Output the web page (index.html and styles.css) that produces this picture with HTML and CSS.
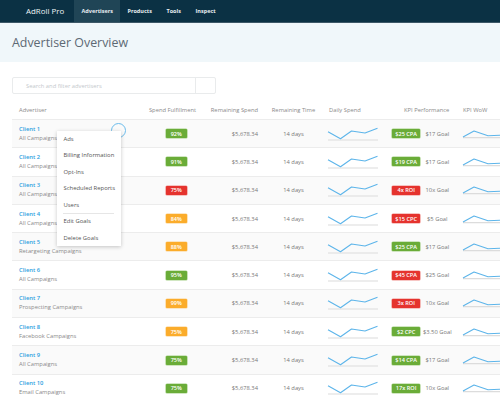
FILE: index.html
```html
<!DOCTYPE html>
<html>
<head>
<meta charset="utf-8">
<link rel="stylesheet" href="styles.css">
</head>
<body>
<nav class="nav">
  <div class="brand">AdRoll Pro</div>
  <a class="tab active">Advertisers</a>
  <a class="tab">Products</a>
  <a class="tab">Tools</a>
  <a class="tab">Inspect</a>
</nav>
<header class="hero"><h1>Advertiser Overview</h1></header>
<main class="content">
  <div class="search">
    <div class="search-input">Search and filter advertisers</div>
    <div class="search-btn"></div>
  </div>
  <div class="table">
    <div class="row head">
      <div class="c1">Advertiser</div>
      <div class="c2">Spend Fulfillment</div>
      <div class="c3">Remaining Spend</div>
      <div class="c4">Remaining Time</div>
      <div class="c5">Daily Spend</div>
      <div class="c6">KPI Performance</div>
      <div class="c7">KPI WoW</div>
    </div>

    <div class="row odd">
      <div class="c1 adv"><a>Client 1</a><span>All Campaigns</span>
        <div class="spinner"></div>
        <ul class="menu">
          <li>Ads</li><li>Billing Information</li><li>Opt-Ins</li><li>Scheduled Reports</li><li>Users</li><li class="sep">Edit Goals</li><li>Delete Goals</li>
        </ul>
      </div>
      <div class="c2"><span class="pill green">92%</span></div>
      <div class="c3">$5,678.34</div>
      <div class="c4">14 days</div>
      <div class="c5"><svg class="spark" viewBox="0 0 50 14"><line x1="0" y1="13" x2="50" y2="13"/><polyline points="0,4.7 12.5,11.7 23.5,4 37,6 49.5,1.3"/></svg></div>
      <div class="c6"><span class="kpi green">$25 CPA</span><span class="goal">$17 Goal</span></div>
      <div class="c7"><svg class="wow" viewBox="0 0 50 14"><line x1="0" y1="10.7" x2="50" y2="10.7"/><polyline points="0,10 11,4 25,8.7 37,8.3 50,8.3"/></svg></div>
    </div>

    <div class="row">
      <div class="c1 adv"><a>Client 2</a><span>All Campaigns</span></div>
      <div class="c2"><span class="pill green">91%</span></div>
      <div class="c3">$5,678.34</div>
      <div class="c4">14 days</div>
      <div class="c5"><svg class="spark" viewBox="0 0 50 14"><line x1="0" y1="13" x2="50" y2="13"/><polyline points="0,4.7 12.5,11.7 23.5,4 37,6 49.5,1.3"/></svg></div>
      <div class="c6"><span class="kpi green">$19 CPA</span><span class="goal">$17 Goal</span></div>
      <div class="c7"><svg class="wow" viewBox="0 0 50 14"><line x1="0" y1="10.7" x2="50" y2="10.7"/><polyline points="0,10 11,4 25,8.7 37,8.3 50,8.3"/></svg></div>
    </div>

    <div class="row odd">
      <div class="c1 adv"><a>Client 3</a><span>All Campaigns</span></div>
      <div class="c2"><span class="pill red">75%</span></div>
      <div class="c3">$5,678.34</div>
      <div class="c4">14 days</div>
      <div class="c5"><svg class="spark" viewBox="0 0 50 14"><line x1="0" y1="13" x2="50" y2="13"/><polyline points="0,4.7 12.5,11.7 23.5,4 37,6 49.5,1.3"/></svg></div>
      <div class="c6"><span class="kpi red">4x ROI</span><span class="goal">10x Goal</span></div>
      <div class="c7"><svg class="wow" viewBox="0 0 50 14"><line x1="0" y1="10.7" x2="50" y2="10.7"/><polyline points="0,10 11,4 25,8.7 37,8.3 50,8.3"/></svg></div>
    </div>

    <div class="row">
      <div class="c1 adv"><a>Client 4</a><span>All Campaigns</span></div>
      <div class="c2"><span class="pill orange">84%</span></div>
      <div class="c3">$5,678.34</div>
      <div class="c4">14 days</div>
      <div class="c5"><svg class="spark" viewBox="0 0 50 14"><line x1="0" y1="13" x2="50" y2="13"/><polyline points="0,4.7 12.5,11.7 23.5,4 37,6 49.5,1.3"/></svg></div>
      <div class="c6"><span class="kpi red">$15 CPC</span><span class="goal">$5 Goal</span></div>
      <div class="c7"><svg class="wow" viewBox="0 0 50 14"><line x1="0" y1="10.7" x2="50" y2="10.7"/><polyline points="0,10 11,4 25,8.7 37,8.3 50,8.3"/></svg></div>
    </div>

    <div class="row odd">
      <div class="c1 adv"><a>Client 5</a><span>Retargeting Campaigns</span></div>
      <div class="c2"><span class="pill orange">88%</span></div>
      <div class="c3">$5,678.34</div>
      <div class="c4">14 days</div>
      <div class="c5"><svg class="spark" viewBox="0 0 50 14"><line x1="0" y1="13" x2="50" y2="13"/><polyline points="0,4.7 12.5,11.7 23.5,4 37,6 49.5,1.3"/></svg></div>
      <div class="c6"><span class="kpi green">$25 CPA</span><span class="goal">$17 Goal</span></div>
      <div class="c7"><svg class="wow" viewBox="0 0 50 14"><line x1="0" y1="10.7" x2="50" y2="10.7"/><polyline points="0,10 11,4 25,8.7 37,8.3 50,8.3"/></svg></div>
    </div>

    <div class="row">
      <div class="c1 adv"><a>Client 6</a><span>All Campaigns</span></div>
      <div class="c2"><span class="pill green">95%</span></div>
      <div class="c3">$5,678.34</div>
      <div class="c4">14 days</div>
      <div class="c5"><svg class="spark" viewBox="0 0 50 14"><line x1="0" y1="13" x2="50" y2="13"/><polyline points="0,4.7 12.5,11.7 23.5,4 37,6 49.5,1.3"/></svg></div>
      <div class="c6"><span class="kpi red">$45 CPA</span><span class="goal">$25 Goal</span></div>
      <div class="c7"><svg class="wow" viewBox="0 0 50 14"><line x1="0" y1="10.7" x2="50" y2="10.7"/><polyline points="0,10 11,4 25,8.7 37,8.3 50,8.3"/></svg></div>
    </div>

    <div class="row odd">
      <div class="c1 adv"><a>Client 7</a><span>Prospecting Campaigns</span></div>
      <div class="c2"><span class="pill orange">99%</span></div>
      <div class="c3">$5,678.34</div>
      <div class="c4">14 days</div>
      <div class="c5"><svg class="spark" viewBox="0 0 50 14"><line x1="0" y1="13" x2="50" y2="13"/><polyline points="0,4.7 12.5,11.7 23.5,4 37,6 49.5,1.3"/></svg></div>
      <div class="c6"><span class="kpi red">3x ROI</span><span class="goal">10x Goal</span></div>
      <div class="c7"><svg class="wow" viewBox="0 0 50 14"><line x1="0" y1="10.7" x2="50" y2="10.7"/><polyline points="0,10 11,4 25,8.7 37,8.3 50,8.3"/></svg></div>
    </div>

    <div class="row">
      <div class="c1 adv"><a>Client 8</a><span>Facebook Campaigns</span></div>
      <div class="c2"><span class="pill orange">75%</span></div>
      <div class="c3">$5,678.34</div>
      <div class="c4">14 days</div>
      <div class="c5"><svg class="spark" viewBox="0 0 50 14"><line x1="0" y1="13" x2="50" y2="13"/><polyline points="0,4.7 12.5,11.7 23.5,4 37,6 49.5,1.3"/></svg></div>
      <div class="c6"><span class="kpi green">$2 CPC</span><span class="goal">$3.50 Goal</span></div>
      <div class="c7"><svg class="wow" viewBox="0 0 50 14"><line x1="0" y1="10.7" x2="50" y2="10.7"/><polyline points="0,10 11,4 25,8.7 37,8.3 50,8.3"/></svg></div>
    </div>

    <div class="row odd">
      <div class="c1 adv"><a>Client 9</a><span>All Campaigns</span></div>
      <div class="c2"><span class="pill green">75%</span></div>
      <div class="c3">$5,678.34</div>
      <div class="c4">14 days</div>
      <div class="c5"><svg class="spark" viewBox="0 0 50 14"><line x1="0" y1="13" x2="50" y2="13"/><polyline points="0,4.7 12.5,11.7 23.5,4 37,6 49.5,1.3"/></svg></div>
      <div class="c6"><span class="kpi green">$14 CPA</span><span class="goal">$17 Goal</span></div>
      <div class="c7"><svg class="wow" viewBox="0 0 50 14"><line x1="0" y1="10.7" x2="50" y2="10.7"/><polyline points="0,10 11,4 25,8.7 37,8.3 50,8.3"/></svg></div>
    </div>

    <div class="row">
      <div class="c1 adv"><a>Client 10</a><span>Email Campaigns</span></div>
      <div class="c2"><span class="pill green">75%</span></div>
      <div class="c3">$5,678.34</div>
      <div class="c4">14 days</div>
      <div class="c5"><svg class="spark" viewBox="0 0 50 14"><line x1="0" y1="13" x2="50" y2="13"/><polyline points="0,4.7 12.5,11.7 23.5,4 37,6 49.5,1.3"/></svg></div>
      <div class="c6"><span class="kpi green">17x ROI</span><span class="goal">10x Goal</span></div>
      <div class="c7"><svg class="wow" viewBox="0 0 50 14"><line x1="0" y1="10.7" x2="50" y2="10.7"/><polyline points="0,10 11,4 25,8.7 37,8.3 50,8.3"/></svg></div>
    </div>
  </div>
</main>
</body>
</html>
```
FILE: styles.css
```css
* { box-sizing: border-box; }
html, body { margin: 0; padding: 0; }
body {
  width: 500px;
  height: 400px;
  overflow: hidden;
  background: #fff;
  font-family: "Open Sans", "Noto Sans", sans-serif;
  color: #777;
}

.nav {
  height: 23px;
  background: #0b3144;
  border-bottom: 1px solid #3d5867;
  display: flex;
  align-items: stretch;
  padding-left: 26px;
}
.brand {
  color: #eef3f6;
  font-size: 7.9px;
  display: flex;
  align-items: center;
  margin-right: 10px;
}
.tab {
  display: flex;
  align-items: center;
  padding: 0 7.3px;
  color: #e6edf1;
  font-size: 5.5px;
  font-weight: 700;
}
.tab.active { background: #204556; }

.hero {
  height: 39px;
  background: #f0f7fa;
  display: flex;
  align-items: center;
  padding-left: 12px;
}
.hero h1 {
  margin: 0;
  font-size: 12.4px;
  font-weight: 400;
  color: #5d6974;
}

.content { padding: 15px 0 0 12px; }

.search {
  width: 204px;
  height: 17px;
  border: 1px solid #e9ebec;
  border-radius: 2px;
  display: flex;
}
.search-input {
  flex: 1;
  display: flex;
  align-items: center;
  padding-left: 13px;
  font-size: 5.8px;
  color: #c4c8cc;
}
.search-btn {
  width: 20px;
  border-left: 1px solid #e9ebec;
}

.table { margin-top: 7px; width: 540px; }
.row {
  display: grid;
  grid-template-columns: 128px 65px 60px 57px 63px 73px 94px;
  height: 28.3px;
  border-top: 1px solid #ececec;
  font-size: 5.8px;
  color: #777;
  align-items: stretch;
}
.row.odd { background: #fafafa; }
.row.head {
  height: 18px;
  border-top: none;
  color: #8a8a8a;
  background: none;
}
.row > div { display: flex; align-items: center; }

.c1 { padding-left: 7px; }
.c2 { justify-content: center; }
.row:not(.head) .c2 { justify-content: flex-start; padding-left: 26px; }
.c3 { justify-content: flex-end; padding-right: 7px; }
.c4 { justify-content: center; }
.c5 { padding-left: 6px; }
.head .c5 { padding-left: 7px; }
.c6 { padding-left: 7px; }
.head .c6 { padding-left: 19px; }
.c7 { padding-left: 5px; }

.adv { flex-direction: column; align-items: flex-start !important; justify-content: center; position: relative; }
.adv a { color: #2b9ee0; font-weight: 600; line-height: 9px; }
.adv span { color: #8a8a8a; line-height: 9px; }

.pill, .kpi {
  display: inline-flex;
  align-items: center;
  justify-content: center;
  height: 9px;
  color: #fff;
  font-weight: 600;
  font-size: 5.6px;
  border-radius: 1px;
}
.pill { width: 20.5px; }
.kpi { width: 28.3px; }
.green { background: #6aac38; box-shadow: 0 0 0 0.6px #a4cf86; }
.red { background: #e5332e; box-shadow: 0 0 0 0.6px #f08d89; }
.orange { background: #fbac2b; box-shadow: 0 0 0 0.6px #fcd089; }
.goal { width: 31px; text-align: center; margin-left: 1.5px; color: #777; }

.spark, .wow { width: 50px; height: 14px; overflow: visible; }
.spark line, .wow line { stroke: #dcdcdc; stroke-width: 1.2; }
.spark polyline, .wow polyline { fill: none; stroke: #5db5ea; stroke-width: 1.1; stroke-linejoin: round; }

.spinner {
  position: absolute;
  left: 98.5px;
  top: 3px;
  width: 15px;
  height: 15px;
  border-radius: 50%;
  border: 1.2px solid #6bbcec;
  z-index: 1;
}
.menu {
  position: absolute;
  left: 45px;
  top: 10.5px;
  width: 64px;
  margin: 0;
  padding: 0;
  list-style: none;
  background: #fff;
  box-shadow: 0 1px 4px rgba(0,0,0,0.22);
  z-index: 2;
}
.menu li {
  height: 16.5px;
  display: flex;
  align-items: center;
  padding-left: 6.5px;
  font-size: 5.9px;
  color: #555;
  position: relative;
}
.menu li.sep::before {
  content: "";
  position: absolute;
  left: 6px;
  right: 7px;
  top: 0;
  border-top: 1px solid #e6e6e6;
}
```
